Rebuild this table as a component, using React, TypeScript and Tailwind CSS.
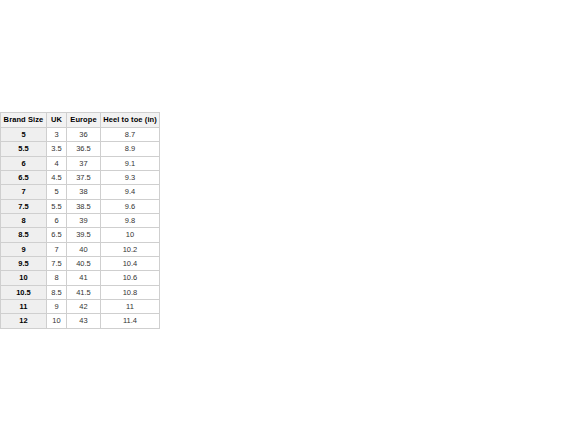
import React from "react";

const rows: [string, string, string, string][] = [
  ["5", "3", "36", "8.7"],
  ["5.5", "3.5", "36.5", "8.9"],
  ["6", "4", "37", "9.1"],
  ["6.5", "4.5", "37.5", "9.3"],
  ["7", "5", "38", "9.4"],
  ["7.5", "5.5", "38.5", "9.6"],
  ["8", "6", "39", "9.8"],
  ["8.5", "6.5", "39.5", "10"],
  ["9", "7", "40", "10.2"],
  ["9.5", "7.5", "40.5", "10.4"],
  ["10", "8", "41", "10.6"],
  ["10.5", "8.5", "41.5", "10.8"],
  ["11", "9", "42", "11"],
  ["12", "10", "43", "11.4"],
];

export default function App() {
  return (
    <div className="w-[588px] h-[441px] bg-white pt-[112px]" style={{ fontFamily: '"Liberation Sans", Arial, sans-serif' }}>
      <table className="border-collapse table-fixed text-[7.5px] leading-none">
        <colgroup>
          <col className="w-[46px]" />
          <col className="w-[20px]" />
          <col className="w-[34px]" />
          <col className="w-[59px]" />
        </colgroup>
        <thead>
          <tr className="h-[15px]">
            {["Brand Size", "UK", "Europe", "Heel to toe (in)"].map((h) => (
              <th key={h} className="border border-[#cfcfcf] bg-[#f2f2f2] font-bold text-black text-center p-0 whitespace-nowrap tracking-[0.1px]">
                {h}
              </th>
            ))}
          </tr>
        </thead>
        <tbody>
          {rows.map((r, i) => (
            <tr key={i} className="h-[14.35px]">
              <td className="border border-[#cfcfcf] bg-[#efefef] font-bold text-black text-center p-0">{r[0]}</td>
              <td className="border border-[#cfcfcf] text-[#333] text-center p-0">{r[1]}</td>
              <td className="border border-[#cfcfcf] text-[#333] text-center p-0">{r[2]}</td>
              <td className="border border-[#cfcfcf] text-[#333] text-center p-0">{r[3]}</td>
            </tr>
          ))}
        </tbody>
      </table>
    </div>
  );
}
